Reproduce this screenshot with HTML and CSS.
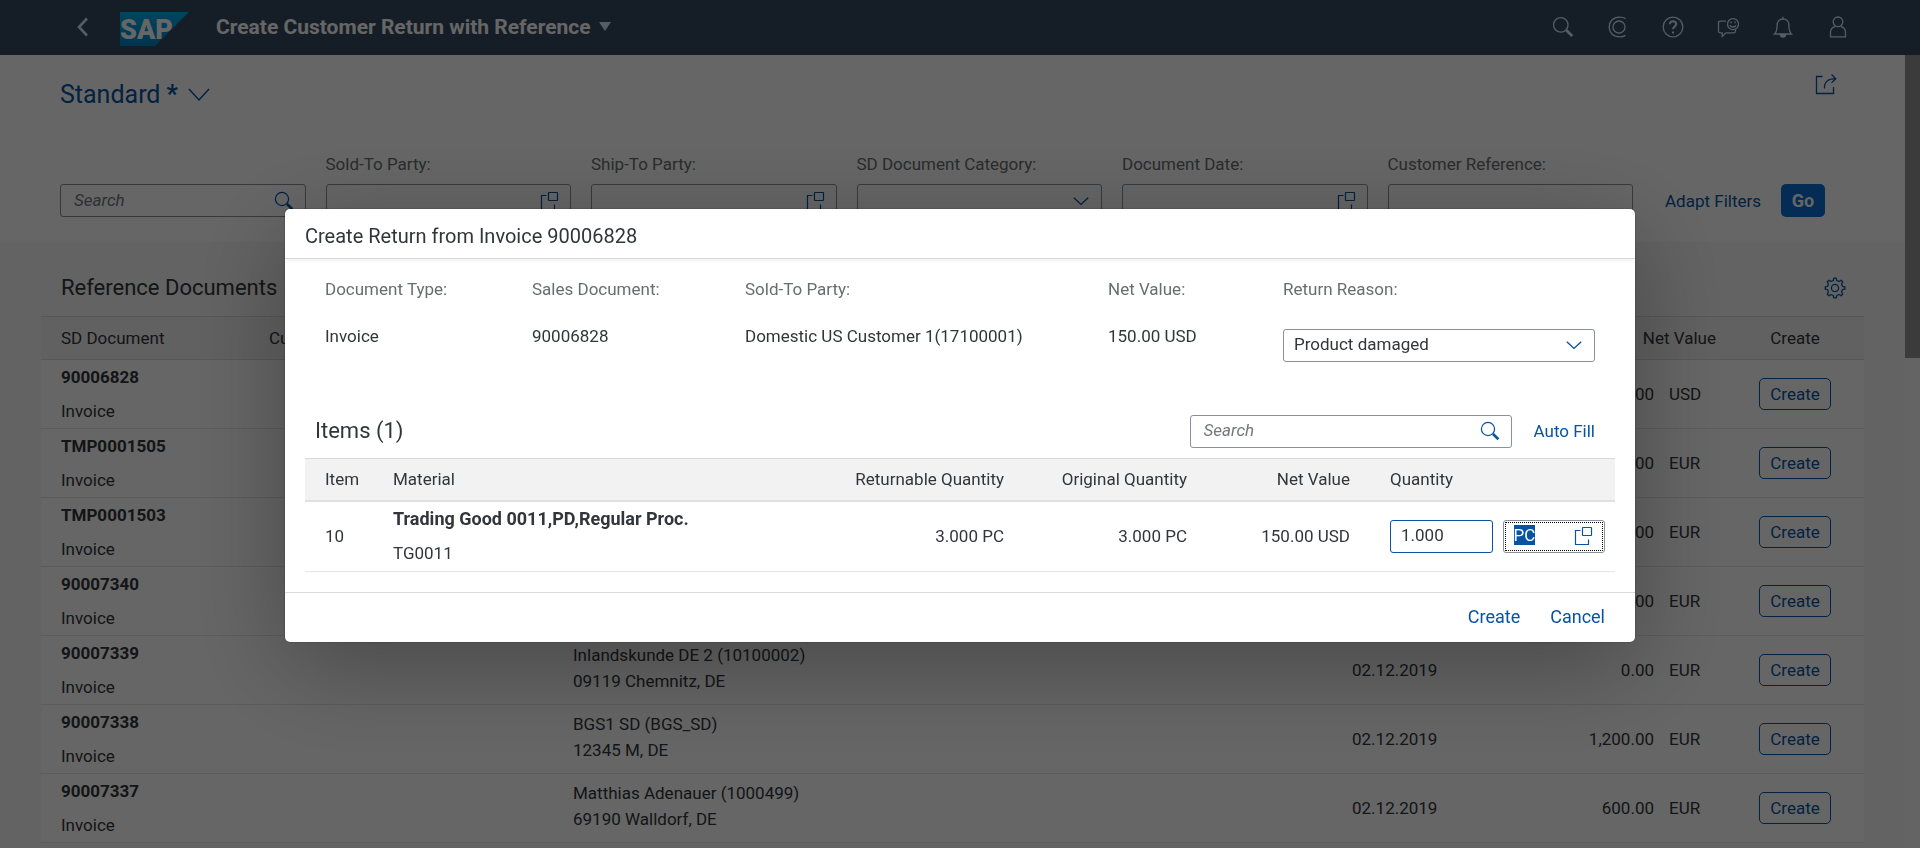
FILE: index.html
```html
<!DOCTYPE html>
<html lang="en">
<head>
<meta charset="utf-8">
<title>Create Customer Return with Reference</title>
<link rel="stylesheet" href="styles.css">
</head>
<body>
<svg class="sprite" aria-hidden="true">
  <symbol id="i-search" viewBox="0 0 20 20"><circle cx="8" cy="8" r="6.6" fill="none" stroke="currentColor" stroke-width="1.2"/><path d="M13 13l5.400 5.200" stroke="currentColor" stroke-width="2.600" fill="none"/></symbol>
  <symbol id="i-help" viewBox="0 0 20 20"><path d="M7.500 4.500h-5v14h13v-5" fill="none" stroke="currentColor" stroke-width="1.200"/><rect x="9.500" y="1.500" width="9" height="8" rx=".5" fill="none" stroke="currentColor" stroke-width="1.200"/></symbol>
  <symbol id="i-down" viewBox="0 0 18 18"><path d="M1.800 5.800l7.200 6.600 7.200-6.600" fill="none" stroke="currentColor" stroke-width="1.400"/></symbol>
</svg>

<div class="app">
  <header class="shell">
    <button class="back" type="button" aria-label="Back"><svg width="14" height="20" viewBox="0 0 14 20"><path d="M12 1.500L4 10l8 8.500" fill="none" stroke="currentColor" stroke-width="2.600"/></svg></button>
    <a class="logo" href="#" aria-label="Home"><svg width="69" height="34" viewBox="0 0 69 34"><defs><linearGradient id="g" x1="0" y1="0" x2="0" y2="1"><stop offset="0" stop-color="#00aeef"/><stop offset="1" stop-color="#0083c4"/></linearGradient></defs><path d="M0 0h69L35 34H0z" fill="url(#g)"/><text class="logo-text" x="0" y="27">SAP</text></svg></a>
    <button class="app-title" type="button">Create Customer Return with Reference<svg width="12" height="9" viewBox="0 0 12 9"><path d="M0 0h12L6 9z" fill="#d1e8ff"/></svg></button>
    <nav class="shell-actions">
      <button type="button" aria-label="Search"><svg class="ic" width="20" height="20"><use href="#i-search"/></svg></button>
      <button type="button" aria-label="CoPilot"><svg class="ic" viewBox="0 0 22 22"><circle cx="12" cy="11" r="6"/><path d="M18.600 2.600C17 1.600 15 1.200 12.500 1.200 6 1.200 2.200 5.500 2.200 11S6 20.800 12.500 20.800c2.500 0 4.500-.4 6.100-1.400"/></svg></button>
      <button type="button" aria-label="Help"><svg class="ic" viewBox="0 0 22 22"><circle cx="11" cy="11" r="9.800"/><path stroke-width="2" d="M7.800 8.300c0-1.900 1.400-3 3.200-3s3.200 1.100 3.200 2.800c0 2.500-3.200 2.600-3.200 5.200M11 15.400v2.200"/></svg></button>
      <button type="button" aria-label="Feedback"><svg class="ic" viewBox="0 0 22 22"><path d="M9 5.200H3c-1 0-1.500.5-1.500 1.500v8.600c0 1 .5 1.500 1.500 1.500h2.200V20.500l3.800-3.700h8c1 0 1.500-.5 1.500-1.500v-1.800"/><circle cx="16" cy="8.200" r="5.500"/><path d="M14 5.500v1.700M18 5.500v1.700M13 9.200c.8 2.400 5.200 2.400 6 0"/></svg></button>
      <button type="button" aria-label="Notifications"><svg class="ic" viewBox="0 0 22 22"><path d="M2.500 18h17c-2.300-2.200-2.600-4.300-2.600-8.500C16.900 5.300 14.500 3 11 3S5.100 5.300 5.100 9.500c0 4.200-.3 6.300-2.600 8.500zM11 .8V3"/><path d="M8.300 18.300a2.700 2.700 0 0 0 5.400 0z" fill="currentColor"/></svg></button>
      <button type="button" aria-label="Profile"><svg class="ic" viewBox="0 0 22 22"><circle cx="11" cy="5.800" r="4.800"/><path d="M3.500 21.400v-4.900c0-3.400 2-5.300 4.600-5.900M13.900 10.600c2.600.6 4.600 2.500 4.600 5.900v4.300h-15"/></svg></button>
    </nav>
  </header>

  <div class="scroll">
    <main class="page">
      <section class="filters">
        <div class="variant-row">
          <button class="variant" type="button">Standard <b>*</b><svg width="22" height="14" viewBox="0 0 22 14"><path d="M1 1l10 11L21 1" fill="none" stroke="currentColor" stroke-width="1.500"/></svg></button>
          <button class="icon-btn" type="button" aria-label="Share"><svg class="ic" viewBox="0 0 22 22"><path d="M7.500 3.500H1.500v17h17v-6.500"/><path d="M9.500 15.500c-.5-6 3-9.800 11-9.800M16.500 1.500l4.300 4.200-4.300 4.200"/></svg></button>
        </div>
        <div class="filter-row">
          <div class="field"><div class="box"><input class="search" type="search" placeholder="Search" aria-label="Search"><svg class="fi" width="20" height="20"><use href="#i-search"/></svg></div></div>
          <div class="field"><label for="f1">Sold-To Party:</label><div class="box"><input id="f1" type="text"><svg class="fi" width="20" height="20"><use href="#i-help"/></svg></div></div>
          <div class="field"><label for="f2">Ship-To Party:</label><div class="box"><input id="f2" type="text"><svg class="fi" width="20" height="20"><use href="#i-help"/></svg></div></div>
          <div class="field"><label for="f3">SD Document Category:</label><div class="box"><input id="f3" type="text"><svg class="fi" width="18" height="18"><use href="#i-down"/></svg></div></div>
          <div class="field"><label for="f4">Document Date:</label><div class="box"><input id="f4" type="text"><svg class="fi" width="20" height="20"><use href="#i-help"/></svg></div></div>
          <div class="field"><label for="f5">Customer Reference:</label><div class="box"><input id="f5" type="text"></div></div>
          <div class="filter-actions"><button class="link-btn" type="button">Adapt Filters</button><button class="go" type="button">Go</button></div>
        </div>
      </section>

      <section class="docs">
        <div class="docs-bar">
          <h2>Reference Documents</h2>
          <button class="icon-btn" type="button" aria-label="Settings"><svg class="ic" viewBox="0 0 22 22"><circle cx="11" cy="11" r="3.600"/><path d="M9.300 3.500l.5-2.300h2.400l.5 2.300 2.300 1 2-1.300 1.800 1.800-1.300 2 1 2.300 2.300.5v2.400l-2.300.5-1 2.300 1.300 2-1.800 1.800-2-1.300-2.300 1-.5 2.300H9.800l-.5-2.300-2.300-1-2 1.300L3.200 17l1.300-2-1-2.300-2.300-.5V9.800l2.300-.5 1-2.300-1.300-2L5 3.200l2 1.300z" stroke-linejoin="round"/></svg></button>
        </div>
        <table class="doc-table">
          <colgroup><col class="c-doc"><col class="c-ref"><col><col class="c-date"><col class="c-net"><col class="c-act"></colgroup>
          <thead><tr><th>SD Document</th><th>Cust.</th><th></th><th></th><th class="num">Net Value</th><th class="mid">Create</th></tr></thead>
          <tbody>
            <tr><td><b>90006828</b><p>Invoice</p></td><td></td><td></td><td></td><td class="num">150.00<span class="cur">USD</span></td><td class="mid"><button class="create" type="button">Create</button></td></tr>
            <tr><td><b>TMP0001505</b><p>Invoice</p></td><td></td><td></td><td></td><td class="num">0.00<span class="cur">EUR</span></td><td class="mid"><button class="create" type="button">Create</button></td></tr>
            <tr><td><b>TMP0001503</b><p>Invoice</p></td><td></td><td></td><td></td><td class="num">0.00<span class="cur">EUR</span></td><td class="mid"><button class="create" type="button">Create</button></td></tr>
            <tr><td><b>90007340</b><p>Invoice</p></td><td></td><td></td><td></td><td class="num">0.00<span class="cur">EUR</span></td><td class="mid"><button class="create" type="button">Create</button></td></tr>
            <tr><td><b>90007339</b><p>Invoice</p></td><td></td><td class="addr">Inlandskunde DE 2 (10100002)<br>09119 Chemnitz, DE</td><td>02.12.2019</td><td class="num">0.00<span class="cur">EUR</span></td><td class="mid"><button class="create" type="button">Create</button></td></tr>
            <tr><td><b>90007338</b><p>Invoice</p></td><td></td><td class="addr">BGS1 SD (BGS_SD)<br>12345 M, DE</td><td>02.12.2019</td><td class="num">1,200.00<span class="cur">EUR</span></td><td class="mid"><button class="create" type="button">Create</button></td></tr>
            <tr><td><b>90007337</b><p>Invoice</p></td><td></td><td class="addr">Matthias Adenauer (1000499)<br>69190 Walldorf, DE</td><td>02.12.2019</td><td class="num">600.00<span class="cur">EUR</span></td><td class="mid"><button class="create" type="button">Create</button></td></tr>
          </tbody>
        </table>
      </section>
    </main>
    <div class="track"><div class="thumb"></div></div>
  </div>
</div>

<div class="overlay">
  <div class="dialog" role="dialog" aria-modal="true" aria-labelledby="dt">
    <h1 class="dialog-head" id="dt">Create Return from Invoice 90006828</h1>
    <div class="dialog-body">
      <div class="form">
        <div class="pair"><span class="lbl">Document Type:</span><span>Invoice</span></div>
        <div class="pair"><span class="lbl">Sales Document:</span><span>90006828</span></div>
        <div class="pair"><span class="lbl">Sold-To Party:</span><span>Domestic US Customer 1(17100001)</span></div>
        <div class="pair"><span class="lbl">Net Value:</span><span>150.00 USD</span></div>
        <div class="pair control"><label for="reason">Return Reason:</label>
          <div class="box select"><select id="reason"><option>Product damaged</option></select><svg class="fi" width="18" height="18"><use href="#i-down"/></svg></div></div>
      </div>
      <div class="items-bar">
        <h2>Items (1)</h2>
        <div class="box items-search"><input class="search" type="search" placeholder="Search" aria-label="Search items"><svg class="fi" width="20" height="20"><use href="#i-search"/></svg></div>
        <button class="link-btn" type="button">Auto Fill</button>
      </div>
      <table class="item-table">
        <colgroup><col class="c-item"><col><col class="c-ret"><col class="c-orig"><col class="c-val"><col class="c-qty"></colgroup>
        <thead><tr><th>Item</th><th>Material</th><th class="num">Returnable Quantity</th><th class="num">Original Quantity</th><th class="num">Net Value</th><th>Quantity</th></tr></thead>
        <tbody><tr><td>10</td><td><b>Trading Good 0011,PD,Regular Proc.</b><p>TG0011</p></td><td class="num">3.000 PC</td><td class="num">3.000 PC</td><td class="num">150.00 USD</td>
          <td class="qty"><div class="qty-row"><div class="box active"><input type="text" value="1.000" aria-label="Quantity"></div><div class="box focused"><input id="unit" type="text" value="PC" aria-label="Unit"><svg class="fi" width="20" height="20"><use href="#i-help"/></svg></div></div></td></tr></tbody>
      </table>
    </div>
    <footer class="dialog-foot"><button class="link-btn" type="button">Create</button><button class="link-btn" type="button">Cancel</button></footer>
  </div>
</div>
<script src="app.js"></script>
</body>
</html>
```
FILE: app.js
```js
const unit = document.getElementById('unit');
unit.focus();
unit.select();
```
FILE: styles.css
```css
* { box-sizing: border-box; }
html, body { height: 100%; margin: 0; }
body {
  overflow: hidden;
  font: 17px/20px Roboto, "Liberation Sans", sans-serif;
  color: #32363a;
  background: #f7f7f7;
}
h1, h2, p { margin: 0; font-weight: 400; }
button, input, select { font: inherit; color: inherit; }
button { border: 0; background: none; padding: 0; cursor: pointer; }
.sprite { display: none; }
.ic { width: 22px; height: 22px; fill: none; stroke: currentColor; stroke-width: 1.3; }

.app { height: 100%; display: flex; flex-direction: column; }
.shell {
  flex: none;
  height: 55px;
  display: flex;
  align-items: center;
  padding: 0 55px 2px 75px;
  background: #354a5f;
  color: #fff;
}
.back { display: flex; width: 45px; color: #d1e8ff; }
.logo { display: flex; margin-top: 5px; }
.logo-text { font: 900 27px Roboto, sans-serif; fill: #fff; }
.app-title {
  display: flex;
  align-items: center;
  gap: 8px;
  margin-left: 27px;
  font-size: 21px;
  font-weight: 700;
}
.shell-actions { margin-left: auto; display: flex; color: #d1e8ff; }
.shell-actions button { width: 55px; height: 53px; display: flex; align-items: center; justify-content: center; }

.scroll { flex: 1; min-height: 0; display: flex; }
.page { flex: 1; min-width: 0; overflow: hidden; }
.track { flex: none; width: 15px; background: #fafafa; }
.thumb { height: 303px; background: #949494; }

.filters { height: 187px; padding: 18px 80px 0 60px; background: #fff; border-bottom: 1px solid #fafafa; }
.variant-row { display: flex; justify-content: space-between; align-items: flex-start; height: 81px; }
.variant { display: flex; align-items: center; gap: 6px; height: 43px; font-size: 25px; color: #0854a0; }
.variant svg { margin-left: 4px; }
.icon-btn { display: flex; color: #0854a0; }
.variant-row .icon-btn { margin-right: -12px; }
.filter-row { display: flex; align-items: flex-end; gap: 20px; }
.field { flex: 1; display: flex; flex-direction: column; gap: 10px; }
label, .lbl { color: #6a6d70; }
.filter-actions { display: flex; align-items: center; gap: 20px; margin-left: 12px; height: 33px; }
.go { width: 44px; height: 33px; border-radius: 5px; background: #0a6ed1; color: #fff; font-weight: 700; font-size: 18px; }
.link-btn { color: #0854a0; white-space: nowrap; }

.box {
  display: flex;
  align-items: center;
  height: 33px;
  border: 1px solid #89919a;
  border-radius: 3px;
  background: #fff;
}
.box input {
  flex: 1;
  min-width: 0;
  width: 0;
  height: 28px;
  padding: 0 0 2px 10px;
  border: 0;
  outline: 0;
  background: none;
}
.box .search { padding-left: 13px; appearance: none; }
.search::placeholder { font-style: italic; color: #74777a; opacity: 1; }
.fi { flex: none; margin-right: 11px; color: #0854a0; }

.docs { margin: 0 41px; }
.docs-bar { display: flex; align-items: center; justify-content: space-between; height: 74px; padding: 18px 18px 0 20px; }
h2 { font-size: 22px; line-height: 28px; }
table { width: 100%; border-collapse: collapse; table-layout: fixed; }
th { height: 43px; padding: 0 20px 1px; font-weight: 400; text-align: left; background: #f2f2f2; border: solid #d9d9d9; border-width: 1px 0; }
td { height: 69px; padding: 0 20px; background: #fff; border-bottom: 1px solid #e5e5e5; }
td b { display: block; }
td p { padding-top: 14px; }
.num { text-align: right; }
.mid { text-align: center; padding: 0; }
.c-doc { width: 208px; }
.c-ref { width: 304px; }
.c-date { width: 150px; }
.c-net { width: 244px; }
.c-act { width: 138px; }
.doc-table .num { padding-right: 10px; }
.addr { line-height: 26px; padding-bottom: 5px; }
.cur { display: inline-block; width: 62px; padding-left: 15px; text-align: left; }
.create { width: 72px; height: 32px; border: 1px solid #0854a0; border-radius: 5px; color: #0854a0; }

.overlay {
  position: fixed;
  inset: 0;
  display: flex;
  align-items: center;
  padding: 2px 285px 0;
  background: rgba(0, 0, 0, .6);
}
.dialog {
  flex: 1;
  min-width: 0;
  border-radius: 5px;
  background: #fff;
  box-shadow: 0 0 2px rgba(0, 0, 0, .4), 0 25px 100px rgba(0, 0, 0, .3);
}
.dialog-head { height: 50px; padding: 0 20px; font-size: 20px; line-height: 54px; border-bottom: 1px solid #d9d9d9; box-shadow: 0 2px 3px rgba(0, 0, 0, .06); }
.dialog-body { padding: 20px; }
.form { display: grid; grid-template-columns: 207fr 213fr 363fr 175fr 312fr; padding: 0 20px; }
.pair { display: flex; flex-direction: column; gap: 27px; white-space: nowrap; }
.control { gap: 30px; }
.select { display: grid; grid-template-columns: 1fr auto; }
.select select { grid-area: 1 / 1 / 2 / 3; height: 31px; padding: 0 0 2px 10px; border: 0; outline: 0; background: none; appearance: none; }
.select .fi { grid-area: 1 / 2; pointer-events: none; }
.items-bar { display: flex; align-items: center; height: 53px; margin-top: 43px; padding: 0 20px 0 10px; }
.items-search { width: 322px; margin: 0 22px 0 auto; }
.item-table th { border-bottom: 2px solid #e0e0e0; }
.item-table td { height: 70px; }
.item-table b { font-size: 18px; }
.c-item { width: 68px; }
.c-ret { width: 195px; }
.c-orig { width: 183px; }
.c-val { width: 163px; }
.c-qty { width: 245px; }
td.qty { padding-right: 10px; }
.qty-row { display: flex; gap: 10px; }
.qty-row .box { flex: 1; }
.active { border-color: #0854a0; }
.focused { outline: 1px dotted #000; outline-offset: -3px; }
.focused input::selection { background: #0854a0; color: #fff; }
.dialog-foot { display: flex; justify-content: flex-end; gap: 30px; height: 50px; padding: 0 30px; border-top: 1px solid #d9d9d9; font-size: 18px; }
```
